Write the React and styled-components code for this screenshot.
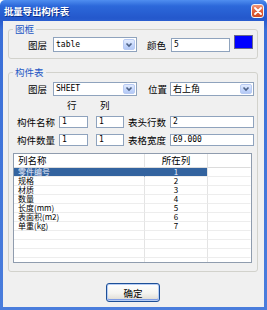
import React from 'react';
import styled, { createGlobalStyle } from 'styled-components';

const Global = createGlobalStyle`
  html, body { margin: 0; padding: 0; background: #ffffff; }
  body { font-family: "Noto Sans CJK SC", "DejaVu Sans", sans-serif; }
  * { box-sizing: border-box; }
`;

const CJK = `"Noto Sans CJK SC", "DejaVu Sans", sans-serif`;
const MONO = `"DejaVu Sans Mono", "Liberation Mono", "Noto Sans CJK SC", monospace`;

const Window = styled.div`
  width: 267px;
  height: 310px;
  display: flex;
  flex-direction: column;
  padding: 0 3px 3px;
  border-radius: 5px 5px 0 0;
  background: linear-gradient(180deg, #4f8ef0 0px, #2c68da 6px, #2458cc 18px, #3a6fd8 30px, #4a7ddc 100%);
`;

const TitleBar = styled.div`
  height: 21px;
  flex-shrink: 0;
  display: flex;
  align-items: center;
  justify-content: space-between;
  padding-left: 1px;
`;

const Title = styled.span`
  color: #ffffff;
  font-family: ${CJK};
  font-weight: 700;
  font-size: 9.5px;
  line-height: 12px;
  letter-spacing: -0.2px;
  text-shadow: 1px 1px 0 #0b2f8a;
`;

const CloseBtn = styled.div`
  width: 13px;
  height: 14px;
  margin-top: 1px;
  border: 1px solid #f4f4f4;
  border-radius: 3px;
  background: linear-gradient(180deg, #f0967a, #e0623c 50%, #cf4a24);
  display: flex;
  align-items: center;
  justify-content: center;
`;

const Body = styled.div`
  flex: 1;
  background: #f0f0f0;
  display: flex;
  flex-direction: column;
  padding: 0 6px 0 5px;
`;

const Group = styled.fieldset`
  margin: ${p => p.$mt}px 0 0;
  padding: 0 0 ${p => p.$pb}px;
  border: 1px solid #d2d2cc;
  border-radius: 3px;
  min-width: 0;
`;

const Legend = styled.legend`
  margin-left: 4px;
  padding: 0 2px;
  font-family: ${CJK};
  font-size: 9.5px;
  line-height: 12px;
  color: #2457c4;
`;

const Row = styled.div`
  display: flex;
  align-items: center;
  height: ${p => p.$h}px;
  margin-top: ${p => p.$mt}px;
`;

const Label = styled.span`
  flex-shrink: 0;
  width: ${p => p.$w}px;
  margin-left: ${p => p.$ml || 0}px;
  padding-left: ${p => p.$pl || 0}px;
  text-align: ${p => p.$align || 'left'};
  font-family: ${CJK};
  font-size: 9.5px;
  line-height: 12px;
  white-space: nowrap;
  color: #000000;
`;

const Field = styled.div`
  flex-shrink: 0;
  position: relative;
  width: ${p => p.$w}px;
  height: ${p => p.$h}px;
  margin-left: ${p => p.$ml || 0}px;
  border: 1px solid #8fa3bd;
  background: #ffffff;
  display: flex;
  align-items: center;
  padding-left: 2px;
  font-family: ${p => (p.$cjk ? CJK : MONO)};
  font-size: ${p => (p.$cjk ? '9px' : '8px')};
  line-height: 10px;
  color: #000000;
  white-space: nowrap;
`;

const ArrowBtn = styled.div`
  position: absolute;
  top: 1px;
  right: 1px;
  bottom: 1px;
  width: 12px;
  border: 1px solid #b9cbf3;
  border-radius: 2px;
  background: linear-gradient(180deg, #e3ecfe, #c3d5fb 60%, #b4c9f6);
  display: flex;
  align-items: center;
  justify-content: center;
`;

const Swatch = styled.div`
  flex-shrink: 0;
  align-self: flex-start;
  margin-top: -2px;
  margin-left: 4px;
  width: 19px;
  height: 14px;
  background: #0000ff;
  border: 1px solid #6a6a8a;
`;

const List = styled.div`
  margin: 7px 0 0 4px;
  width: 239px;
  height: 110px;
  border: 1px solid #8f9cae;
  background: #ffffff;
  overflow: hidden;
`;

const ListRow = styled.div`
  display: grid;
  grid-template-columns: 131px 63px 1fr;
  height: ${p => p.$h}px;
`;

const Cell = styled.div`
  border-right: 1px solid ${p => (p.$last ? 'transparent' : p.$sel && p.$first ? '#33639f' : '#e4e4e4')};
  border-bottom: 1px solid ${p => (p.$head ? '#dcdcdc' : '#ededed')};
  background: ${p => (p.$sel && !p.$last ? '#33639f' : 'transparent')};
  color: ${p => (p.$sel ? '#e8eefc' : '#000000')};
  text-align: ${p => (p.$center ? 'center' : 'left')};
  padding-left: ${p => (p.$center ? 0 : 4)}px;
  font-family: ${CJK};
  font-size: ${p => (p.$head ? '9.5px' : '8px')};
  line-height: ${p => (p.$head ? '13px' : '8px')};
  white-space: nowrap;
`;

const Button = styled.button`
  display: block;
  margin: 11px auto 0;
  width: 54px;
  height: 19px;
  padding: 0;
  border: 1px solid #1d4f97;
  border-radius: 3px;
  background: linear-gradient(180deg, #ffffff, #f4f4f0 55%, #dcd8cf);
  box-shadow: inset 0 0 0 1px #b6cdf4, inset 0 -1px 0 1px #7f9de6;
  font-family: ${CJK};
  font-size: 9.5px;
  color: #000000;
`;

const Chevron = () => (
  <svg width="8" height="6" viewBox="0 0 8 6">
    <polyline points="1.5,1.5 4,4 6.5,1.5" fill="none" stroke="#4d6185" strokeWidth="1.6" />
  </svg>
);

const CloseX = () => (
  <svg width="8" height="8" viewBox="0 0 8 8">
    <path d="M1 1 L7 7 M7 1 L1 7" stroke="#ffffff" strokeWidth="1.8" strokeLinecap="round" />
  </svg>
);

const Combo = ({ w, h, ml, cjk, children }) => (
  <Field $w={w} $h={h} $ml={ml} $cjk={cjk}>
    {children}
    <ArrowBtn><Chevron /></ArrowBtn>
  </Field>
);

const rows = [
  ['零件编号', '1'],
  ['规格', '2'],
  ['材质', '3'],
  ['数量', '4'],
  ['长度(mm)', '5'],
  ['表面积(m2)', '6'],
  ['单重(kg)', '7'],
  ['', ''],
  ['', ''],
  ['', ''],
  ['', ''],
];

export default function App() {
  return (
    <>
      <Global />
      <Window>
        <TitleBar>
          <Title>批量导出构件表</Title>
          <CloseBtn><CloseX /></CloseBtn>
        </TitleBar>
        <Body>
          <Group $mt={2} $pb={6}>
            <Legend>图框</Legend>
            <Row $h={15} $mt={2}>
              <Label $w={38} $align="right">图层</Label>
              <Combo w={84} h={15} ml={6}>table</Combo>
              <Label $w={20} $ml={10}>颜色</Label>
              <Field $w={59} $h={14} $ml={4}>5</Field>
              <Swatch />
            </Row>
          </Group>

          <Group $mt={7} $pb={8}>
            <Legend>构件表</Legend>
            <Row $h={14} $mt={4}>
              <Label $w={38} $align="right">图层</Label>
              <Combo w={84} h={14} ml={6}>SHEET</Combo>
              <Label $w={20} $ml={11}>位置</Label>
              <Combo w={84} h={14} ml={2} cjk>右上角</Combo>
            </Row>
            <Row $h={12} $mt={3}>
              <Label $w={29} $ml={50} $pl={8}>行</Label>
              <Label $w={28} $ml={8} $pl={4}>列</Label>
            </Row>
            <Row $h={12} $mt={5}>
              <Label $w={46} $align="right">构件名称</Label>
              <Field $w={29} $h={12} $ml={4}>1</Field>
              <Field $w={28} $h={12} $ml={8}>1</Field>
              <Label $w={38} $ml={4}>表头行数</Label>
              <Field $w={84} $h={12} $ml={4}>2</Field>
            </Row>
            <Row $h={12} $mt={6}>
              <Label $w={46} $align="right">构件数量</Label>
              <Field $w={29} $h={12} $ml={4}>1</Field>
              <Field $w={28} $h={12} $ml={8}>1</Field>
              <Label $w={38} $ml={4}>表格宽度</Label>
              <Field $w={84} $h={12} $ml={4}>69.000</Field>
            </Row>
            <List>
              <ListRow $h={14}>
                <Cell $head $first>列名称</Cell>
                <Cell $head $center>所在列</Cell>
                <Cell $head $last />
              </ListRow>
              {rows.map(([name, col], i) => (
                <ListRow key={i} $h={9}>
                  <Cell $first $sel={i === 0}>{name}</Cell>
                  <Cell $center $sel={i === 0}>{col}</Cell>
                  <Cell $last $sel={i === 0} />
                </ListRow>
              ))}
            </List>
          </Group>

          <Button>确定</Button>
        </Body>
      </Window>
    </>
  );
}
